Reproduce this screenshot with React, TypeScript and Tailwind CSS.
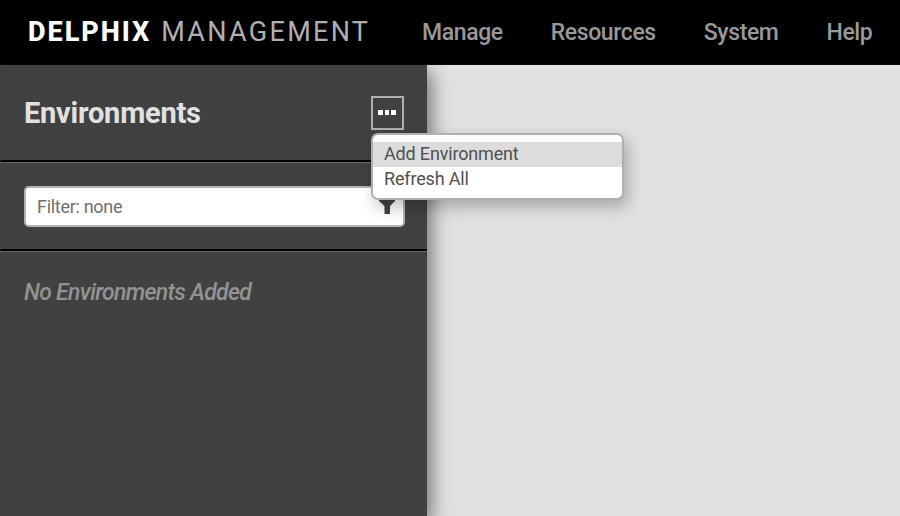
const navItems = ['Manage', 'Resources', 'System', 'Help']

function Divider() {
  return <div className="h-[3px] rounded-tl-xs border-t-2 border-black bg-[#6a6a6a]" />
}

export default function App() {
  return (
    <div className="flex h-[516px] w-[900px] flex-col overflow-hidden bg-[#e1e1e1] font-['Roboto',sans-serif]">
      <header className="flex h-[65px] shrink-0 items-center border-b border-[#0c0c0c] bg-black pl-7 text-[#999]">
        <h1 className="flex w-[394px] gap-[10px] whitespace-nowrap text-[27px]">
          <span className="font-extrabold tracking-[2px] text-white">DELPHIX</span>
          <span className="font-normal tracking-[2.3px] text-[#b0b0b0]">MANAGEMENT</span>
        </h1>
        <nav className="flex gap-12 pt-[3px] text-[23px] font-medium tracking-[-0.39px]">
          {navItems.map((item) => <a key={item}>{item}</a>)}
        </nav>
      </header>
      <aside className="relative w-[427px] flex-1 bg-[#414141] shadow-[4px_7px_18px_rgba(0,0,0,0.5)]">
        <div className="flex h-[95px] items-center justify-between pl-6 pr-[23px]">
          <h2 className="pt-0.5 text-[29px] font-bold tracking-[-0.23px] text-[#e1e1e1]">Environments</h2>
          <button className="mt-px flex h-[34px] w-[33px] items-center justify-center gap-[2px] border-2 border-[#b0b0b0] pb-[2px] pr-px">
            <i className="h-[5px] w-[4.5px] bg-white" />
            <i className="h-[5px] w-[4.5px] bg-white" />
            <i className="h-[5px] w-[4.5px] bg-white" />
          </button>
        </div>
        <Divider />
        <div className="h-[86px] pl-6 pr-[22px] pt-[23px]">
          <div className="flex h-[41px] items-center justify-between rounded-[5px] border-2 border-[#b2b2b2] bg-white pl-[11px] pr-2 text-[18px] tracking-[-0.3px] text-[#707070]">
            <span className="pb-px">Filter: none</span>
            <svg width="16" height="17" viewBox="0 0 16 17" fill="#414141" className="-mt-0.5">
              <path d="M0 0h16v4L11 9V17H5.5V9L0 4z" />
            </svg>
          </div>
        </div>
        <Divider />
        <p className="pl-6 pt-[24px] text-[23px] font-medium italic tracking-[-0.68px] text-[#939393]">No Environments Added</p>
        <div className="absolute left-[371px] top-[68px] h-[67px] w-[253px] rounded-[7px] border-2 border-[#b0b0b0] bg-white pt-[7px] text-[18px] leading-[25px] tracking-[-0.17px] text-[#505050] shadow-[4px_7px_16px_rgba(0,0,0,0.25)]">
          <div className="h-[25px] bg-[#dcdcdc] pl-[11px]"><span className="relative -top-px">Add Environment</span></div>
          <div className="pl-[11px]"><span className="relative -top-[1.5px]">Refresh All</span></div>
        </div>
      </aside>
    </div>
  )
}
